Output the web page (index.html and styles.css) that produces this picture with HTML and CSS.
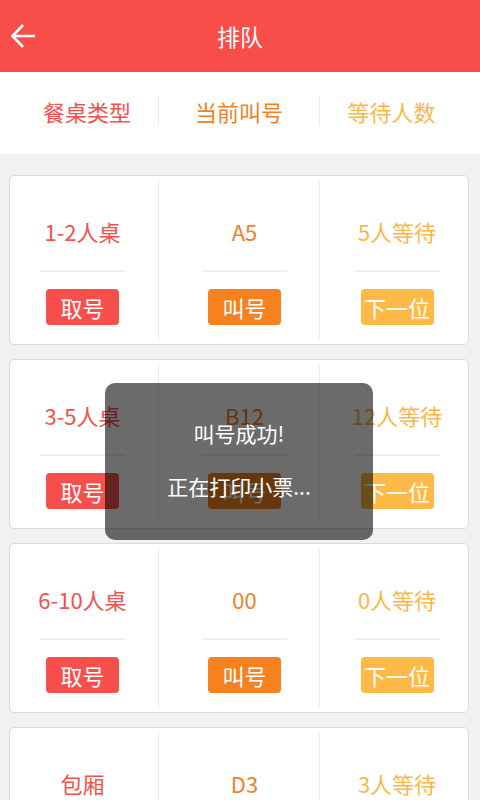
FILE: index.html
```html
<!DOCTYPE html>
<html lang="zh-CN">
<head>
    <meta charset="UTF-8">
    <meta name="viewport" content="width=device-width, initial-scale=1.0">
    <title>排队</title>
    <link rel="stylesheet" href="styles.css">
</head>
<body>
    <header class="topbar">
        <svg class="back" width="28" height="28" viewBox="0 0 28 28">
            <path d="M25 14H3M13 3L2.5 14L13 25" fill="none" stroke="#fff" stroke-width="2.6"/>
        </svg>
        <h1>排队</h1>
        <span></span>
    </header>

    <div class="tabs">
        <div class="tab red">餐桌类型</div>
        <div class="tab orange">当前叫号</div>
        <div class="tab yellow">等待人数</div>
    </div>
    <div class="zigzag"></div>

    <div class="list">
        <div class="card">
            <div class="cell"><div class="value red">1-2人桌</div><div class="rule"></div><div class="btn bg-red">取号</div></div>
            <div class="cell"><div class="value orange">A5</div><div class="rule"></div><div class="btn bg-orange">叫号</div></div>
            <div class="cell"><div class="value yellow">5人等待</div><div class="rule"></div><div class="btn bg-yellow">下一位</div></div>
        </div>
        <div class="card">
            <div class="cell"><div class="value red">3-5人桌</div><div class="rule"></div><div class="btn bg-red">取号</div></div>
            <div class="cell"><div class="value orange">B12</div><div class="rule"></div><div class="btn bg-orange">叫号</div></div>
            <div class="cell"><div class="value yellow">12人等待</div><div class="rule"></div><div class="btn bg-yellow">下一位</div></div>
        </div>
        <div class="card">
            <div class="cell"><div class="value red">6-10人桌</div><div class="rule"></div><div class="btn bg-red">取号</div></div>
            <div class="cell"><div class="value orange">00</div><div class="rule"></div><div class="btn bg-orange">叫号</div></div>
            <div class="cell"><div class="value yellow">0人等待</div><div class="rule"></div><div class="btn bg-yellow">下一位</div></div>
        </div>
        <div class="card">
            <div class="cell"><div class="value red">包厢</div><div class="rule"></div><div class="btn bg-red">取号</div></div>
            <div class="cell"><div class="value orange">D3</div><div class="rule"></div><div class="btn bg-orange">叫号</div></div>
            <div class="cell"><div class="value yellow">3人等待</div><div class="rule"></div><div class="btn bg-yellow">下一位</div></div>
        </div>
    </div>

    <div class="toast">
        <p>叫号成功!</p>
        <p>正在打印小票...</p>
    </div>
</body>
</html>
```

FILE: styles.css
```css
html, body {
    height: 800px;
    overflow: hidden;
}
body {
    margin: 0;
    font-family: "Noto Sans CJK SC", "Noto Sans", sans-serif;
    background-color: #f0f1f3;
}
.topbar {
    display: grid;
    grid-template-columns: 60px 1fr 60px;
    align-items: center;
    height: 72px;
    background-color: #f84e4a;
}
.back {
    margin-left: 10px;
}
.topbar h1 {
    margin: 0;
    text-align: center;
    color: #fff;
    font-size: 23px;
    font-weight: normal;
}
.tabs {
    display: grid;
    grid-template-columns: 158px 161px 1fr;
    align-items: center;
    height: 78px;
    background-color: #fff;
}
.tab {
    font-size: 22px;
    line-height: 30px;
    text-align: center;
}
.tab:first-child {
    padding-left: 16px;
}
.tab + .tab {
    border-left: 1px solid #eaeaea;
}
.tab:last-child {
    padding-right: 17px;
}
.zigzag {
    height: 6px;
    background: radial-gradient(circle at 3px 0, #fff 3.5px, transparent 4px) 0 0 / 6px 6px repeat-x;
}
.red { color: #f5504d; }
.orange { color: #f47f22; }
.yellow { color: #fdb64a; }
.bg-red { background-color: #f64f4c; }
.bg-orange { background-color: #f6811f; }
.bg-yellow { background-color: #feb947; }
.list {
    display: flex;
    flex-direction: column;
    gap: 14px;
    width: 460px;
    margin: 19px 0 0 9px;
}
.card {
    display: grid;
    grid-template-columns: 148px 161px 1fr;
    flex-shrink: 0;
    height: 170px;
    box-sizing: border-box;
    padding: 5px 0;
    background-color: #fff;
    border: 1px solid #dcdcdc;
    border-radius: 5px;
}
.cell {
    display: flex;
    flex-direction: column;
    align-items: center;
}
.cell:first-child {
    padding-right: 3px;
}
.cell + .cell {
    border-left: 1px solid #ebebeb;
    padding-left: 11px;
}
.cell:last-child {
    padding-left: 6px;
}
.value {
    margin-top: 35px;
    font-size: 22px;
    line-height: 30px;
    white-space: nowrap;
}
.rule {
    width: 85px;
    height: 2px;
    margin-top: 24px;
    background-color: #efefef;
}
.btn {
    width: 73px;
    height: 36px;
    margin-top: 17px;
    border-radius: 4px;
    color: #fff;
    font-size: 22px;
    line-height: 36px;
    text-align: center;
    white-space: nowrap;
}
.toast {
    position: absolute;
    left: 105px;
    top: 383px;
    width: 268px;
    height: 157px;
    box-sizing: border-box;
    padding-top: 35px;
    border-radius: 10px;
    background-color: rgba(0, 0, 0, 0.58);
    color: #fff;
    text-align: center;
}
.toast p {
    margin: 0 0 23px;
    font-size: 21px;
    line-height: 30px;
}
```
